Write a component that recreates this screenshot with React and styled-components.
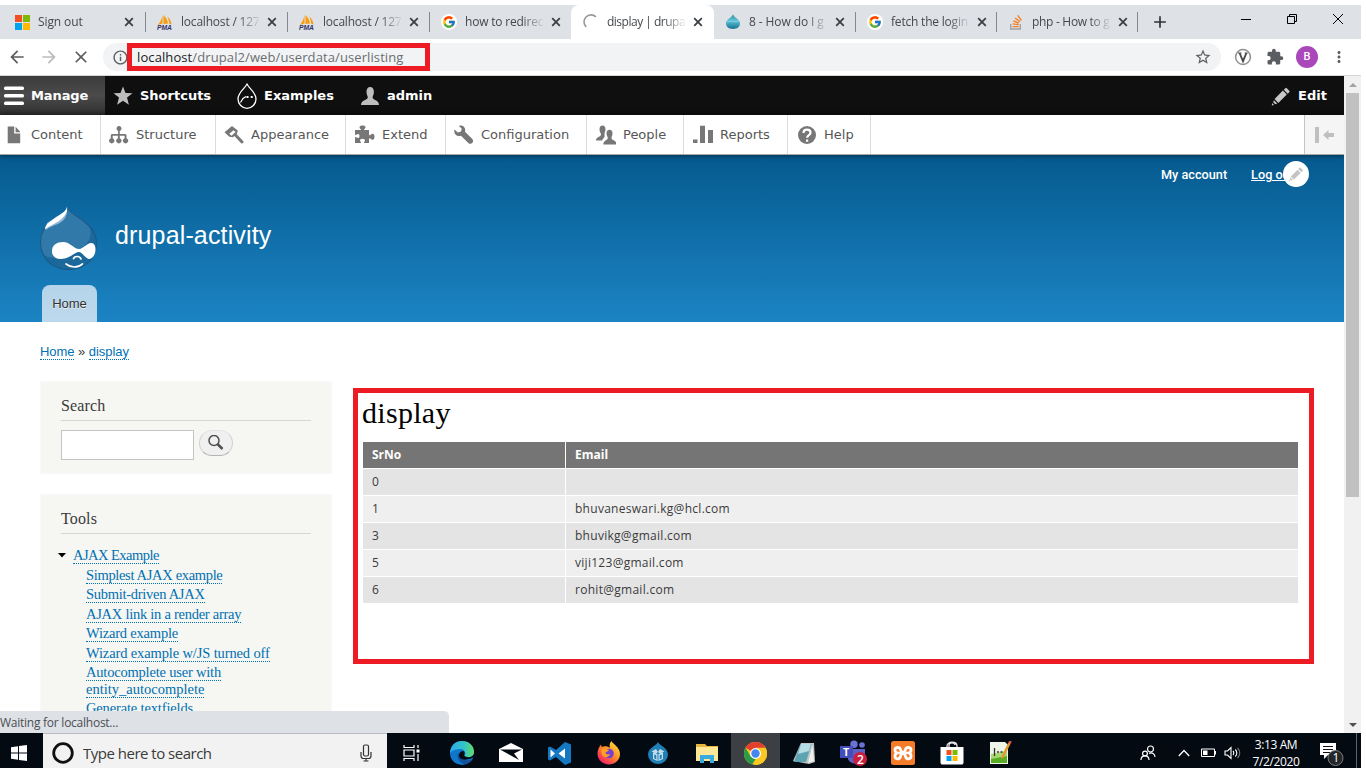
import React from "react";
import styled, { createGlobalStyle, css } from "styled-components";
import { FcGoogle } from "react-icons/fc";
import { MdArrowBack, MdArrowForward, MdClose, MdInfoOutline, MdStarBorder, MdExtension, MdMoreVert, MdAdd } from "react-icons/md";

const GlobalStyle = createGlobalStyle`
  * { box-sizing: border-box; }
  html, body { margin: 0; padding: 0; background: #fff; overflow: hidden; }
  svg { display: block; flex: none; }
  a { color: inherit; text-decoration: none; }
`;

const ui = `"Open Sans", "Noto Sans", sans-serif`;
const georgia = `"Liberation Serif", serif`;
const arial = `"Liberation Sans", Arial, sans-serif`;
const verdana = `"DejaVu Sans", Verdana, sans-serif`;

const Screen = styled.div`
  width: 1361px;
  height: 768px;
  padding-top: 5px;
  display: flex;
  flex-direction: column;
  overflow: hidden;
  background: #fff;
  font-family: ${ui};
  white-space: nowrap;
`;

/* ---------- Browser chrome ---------- */
const TabStrip = styled.div`
  height: 34px;
  flex: none;
  display: flex;
  background: #dee1e6;
  color: #45494d;
`;
const Tab = styled.div`
  width: ${(p) => p.$w || 142}px;
  padding-left: ${(p) => p.$pad || 11}px;
  display: flex;
  align-items: center;
  ${(p) => p.$active && css`
    background: #fff;
    border-radius: 8px 8px 0 0;
  `}
`;
const Favicon = styled.div`
  width: 16px;
  height: 16px;
  margin-right: 8px;
  flex: none;
  display: grid;
  place-items: center;
  border-radius: 50%;
  background: ${(p) => (p.$round ? "#fff" : "transparent")};
`;
const TabTitle = styled.div`
  width: 80px;
  font-size: 12px;
  line-height: 18px;
  letter-spacing: ${(p) => p.$ls || -0.2}px;
  mask-image: linear-gradient(90deg, #000 57px, transparent 80px);
`;
const TabClose = styled.div`
  width: 14px;
  margin-left: 4px;
  color: #3c4043;
`;
const TabDivider = styled.i`
  width: 1px;
  height: 20px;
  margin-left: auto;
  background: #85898e;
`;
const NewTab = styled.div`
  padding: 7px 0 0 12px;
  flex: 1;
  color: #303336;
`;
const WindowButtons = styled.div`
  display: flex;
  gap: 34px;
  padding: 8px 17px 0 0;
`;

const AddressRow = styled.div`
  height: 37px;
  flex: none;
  display: flex;
  align-items: center;
  border-bottom: 1px solid #d4d6d8;
  color: #5a5d61;
`;
const NavButtons = styled.div`
  display: flex;
  gap: 12px;
  width: 103px;
  padding-left: 7px;
`;
const AddressBar = styled.div`
  width: 1118px;
  height: 28px;
  padding: 0 9px 0 9px;
  display: flex;
  align-items: center;
  border-radius: 14px;
  background: #f1f3f4;
`;
const UrlMark = styled.div`
  width: 303px;
  height: 28px;
  margin-left: -2px;
  margin-right: auto;
  padding-left: 5px;
  border: 5px solid #ed1c24;
  font-size: 13px;
  line-height: 18px;
  letter-spacing: 0.1px;
  color: #6a6e72;
  background: #f1f3f4;
  b { font-weight: 400; color: #202124; }
`;
const Extensions = styled.div`
  flex: 1;
  display: flex;
  align-items: center;
  padding-left: 13px;
`;
const ExtensionIcon = styled.div`
  margin-left: 14px;
`;
const Avatar = styled.div`
  width: 22px;
  height: 22px;
  margin: 0 12px 0 12px;
  border-radius: 50%;
  background: #a947bb;
  color: #fff;
  font: 500 11px/22px Roboto, sans-serif;
  text-align: center;
`;

/* ---------- Page ---------- */
const Viewport = styled.div`
  flex: 1;
  min-height: 0;
  display: flex;
  position: relative;
`;
const Page = styled.div`
  width: 1344px;
  overflow: hidden;
`;
const ScrollTrack = styled.div`
  width: 17px;
  padding: 0 2px;
  display: flex;
  flex-direction: column;
  align-items: center;
  background: #f1f1f1;
`;
const ScrollArrow = styled.i`
  height: 17px;
  display: grid;
  place-items: center;
`;
const ScrollThumb = styled.i`
  width: 13px;
  height: 404px;
  margin-bottom: auto;
  background: #c1c1c1;
`;

const AdminBar = styled.div`
  height: 39px;
  display: flex;
  background: #0f0f0f;
  color: #fff;
  font: 700 13px/39px ${verdana};
`;
const AdminTab = styled.div`
  width: ${(p) => p.$w}px;
  padding-left: ${(p) => p.$pad}px;
  display: flex;
  align-items: center;
  gap: 7px;
  letter-spacing: ${(p) => p.$ls || 0}px;
  ${(p) => p.$active && css`background: linear-gradient(#3c3c3c 0%, #4b4b4b 50%, #2f2f2f 100%);`}
`;
const EditTab = styled(AdminTab)`
  margin-left: auto;
`;
const Tray = styled.div`
  height: 40px;
  display: flex;
  position: relative;
  background: #fff;
  border-bottom: 1px solid #a6a6a6;
  box-shadow: 0 0 5px 1px rgba(0, 0, 0, 0.45);
`;
const TrayItem = styled.div`
  width: ${(p) => p.$w}px;
  padding-left: ${(p) => p.$pad || 8}px;
  display: flex;
  align-items: center;
  gap: 7px;
  border-right: 1px solid #dcdcdc;
  color: #565656;
  font: 13px/39px ${verdana};
`;
const TrayToggle = styled.div`
  width: 40px;
  margin-left: auto;
  border-left: 1px solid #c4c4c4;
  background: #f5f5f5;
`;

const Header = styled.header`
  height: 167px;
  padding-left: 40px;
  display: flex;
  flex-direction: column;
  background: linear-gradient(#055a8e, #1c84c4);
  color: #fff;
  font-family: ${arial};
`;
const AccountMenu = styled.nav`
  align-self: flex-end;
  display: flex;
  gap: 24px;
  height: 51px;
  padding: 11px 50px 0 0;
  font: 500 12.7px/18px Roboto, ${arial};
  position: relative;
  u { text-underline-offset: 1px; }
`;
const EditBadge = styled.span`
  position: absolute;
  right: 35px;
  top: 6px;
  width: 26px;
  height: 26px;
  border-radius: 50%;
  display: grid;
  place-items: center;
  background: #fff;
`;
const Branding = styled.div`
  display: flex;
  height: 79px;
  gap: 17px;
  h1 {
    margin: 13px 0 0;
    font: 400 25px/32px ${arial};
    letter-spacing: 0.15px;
  }
`;
const HomeTab = styled.div`
  width: 55px;
  height: 37px;
  margin-left: 2px;
  border-radius: 8px 8px 0 0;
  background: linear-gradient(#b5d4ea, #bdd9ec);
  color: #333;
  font: 13px/37px ${arial};
  text-align: center;
  text-shadow: 0 1px 0 #eee;
`;

const Link = styled.a`
  color: #0071b3;
  border-bottom: 1px dotted #0071b3;
`;
const Breadcrumb = styled.nav`
  height: 59px;
  padding: 22px 0 0 40px;
  font: 13px/15px ${arial};
  color: #3b3b3b;
  letter-spacing: -0.05px;
  ${Link} { display: inline-block; }
`;
const Columns = styled.div`
  display: flex;
  align-items: flex-start;
  padding-left: 40px;
`;
const Sidebar = styled.aside`
  width: 292px;
  display: flex;
  flex-direction: column;
  gap: 20px;
  color: #3b3b3b;
  font-family: ${georgia};
`;
const Block = styled.section`
  height: ${(p) => p.$h}px;
  padding: 14px 20px 0;
  border: 1px solid #f9f9f9;
  background: #f6f6f2;
  h2 {
    height: 25px;
    margin: 0 0 9px;
    border-bottom: 1px solid #d6d6d6;
    font: 400 16px/20px ${georgia};
    letter-spacing: 0.15px;
  }
`;
const SearchForm = styled.div`
  display: flex;
  gap: 5px;
`;
const SearchInput = styled.div`
  width: 133px;
  height: 30px;
  border: 1px solid #c4c4c4;
  background: #fff;
`;
const SearchButton = styled.div`
  width: 34px;
  height: 26px;
  display: grid;
  place-items: center;
  border: 1px solid;
  border-color: #e4e4e4 #d2d2d2 #b4b4b4;
  border-radius: 13px;
  background: #f0f0f0;
`;
const MenuTop = styled.div`
  display: flex;
  align-items: center;
  gap: 7px;
  height: 20px;
  margin-top: 11px;
  margin-left: -3px;
  font-size: 14.5px;
  line-height: 16px;
  ${Link} { letter-spacing: -0.53px; }
`;
const MenuList = styled.ul`
  margin: 2px 0 0 25px;
  padding: 0;
  list-style: none;
  font-size: 14.5px;
  line-height: 17px;
`;
const MenuItem = styled.li`
  margin-bottom: 2.4px;
`;
const MenuLink = styled(Link)`
  line-height: 14px;
  letter-spacing: ${(p) => p.$ls}px;
`;

const Main = styled.main`
  width: 961px;
  height: 276px;
  margin: 7px 0 0 21px;
  padding: 2px 11px 0 5px;
  border: 5px solid #ed1c24;
  h1 {
    height: 47px;
    margin: 0 0 0 -1px;
    font: 400 30px/36px ${georgia};
    letter-spacing: 0.3px;
    color: #000;
  }
`;
const Table = styled.div`
  display: grid;
  grid-template-columns: 202px 1fr;
  grid-auto-rows: 26px;
  gap: 1px;
  font: 12px/26px ${ui};
  color: #3b3b3b;
`;
const Cell = styled.div`
  padding-left: 9px;
  background: ${(p) => (p.$odd ? "#e4e4e4" : "#efefef")};
  letter-spacing: 0.28px;
`;
const HeadCell = styled.div`
  padding-left: 9px;
  background: #757575;
  color: #fff;
  font-weight: 700;
`;

const StatusBubble = styled.div`
  position: absolute;
  left: 0;
  bottom: 0;
  width: 449px;
  height: 22px;
  border-radius: 0 5px 0 0;
  background: #dee1e6;
  color: #4b4e52;
  font-size: 12px;
  line-height: 23px;
  letter-spacing: -0.25px;
`;

/* ---------- Taskbar ---------- */
const Taskbar = styled.div`
  height: 35px;
  flex: none;
  display: flex;
  background: #040a12;
  color: #fff;
`;
const Start = styled.div`
  width: 43px;
  padding: 12px 0 0 11px;
`;
const SearchBox = styled.div`
  width: 344px;
  padding: 4px 15px 0 9px;
  display: flex;
  align-items: center;
  gap: 9px;
  border-top: 1px solid #b9bcc0;
  background: #f2f2f2;
  color: #3a3a3a;
  font-size: 15px;
  letter-spacing: -0.5px;
  > :last-child { margin-left: auto; }
`;
const AppButton = styled.div`
  width: 49px;
  padding-top: 5px;
  display: grid;
  place-items: center;
  ${(p) => p.$first && css`margin-right: 1px;`}
  ${(p) => p.$active && css`background: #3c4045;`}
`;
const SystemTray = styled.div`
  margin-left: auto;
  width: 221px;
  display: flex;
  align-items: center;
  padding-top: 4px;
`;
const Spacer = styled.i`
  width: ${(p) => p.$w}px;
`;
const Clock = styled.div`
  width: 62px;
  margin: 1px 0 0 4px;
  font-size: 12px;
  line-height: 17px;
  letter-spacing: -0.4px;
  text-align: center;
`;
const Notification = styled.div`
  margin: 4px 0 0 12px;
`;
const ShowDesktop = styled.i`
  width: 1px;
  height: 35px;
  margin: -4px 4px 0 auto;
  background: #5d6268;
`;

/* ---------- Icons ---------- */
const Microsoft = ({ s = 15 }) => (
  <svg width={s} height={s} viewBox="0 0 15 15">
    <path fill="#f25022" d="M0 0h7v7H0z" /><path fill="#7fba00" d="M8 0h7v7H8z" />
    <path fill="#00a4ef" d="M0 8h7v7H0z" /><path fill="#ffb900" d="M8 8h7v7H8z" />
  </svg>
);
const Pma = () => (
  <svg width="16" height="16" viewBox="0 0 16 16">
    <path fill="#f89c0e" d="M5.500 1v8.500L1 11C3 8 5 5 5.500 1zM6.500 1c2.500 2.500 4 5 4.500 8.500L6.500 10zM10 2.500c3 2 4 4.500 4.500 8L12 9.500c0-3-.7-5-2-7z" />
    <text x="0" y="15.800" fontFamily="Liberation Sans" fontWeight="700" fontStyle="italic" fontSize="6.5" fill="#33336b" textLength="15" lengthAdjust="spacingAndGlyphs">PMA</text>
  </svg>
);
const Google = () => <FcGoogle size={14} />;
const Spinner = () => (
  <svg width="16" height="16" viewBox="0 0 16 16" fill="none" stroke="#999" strokeWidth="1.600">
    <path d="M3.200 13A7 7 0 0 1 13 2.800" />
  </svg>
);
const BlueDrop = () => (
  <svg width="16" height="16" viewBox="0 0 16 16">
    <defs><linearGradient id="bd" x1="0" y1="0" x2="0" y2="1"><stop offset="0" stopColor="#3a8b97" /><stop offset=".45" stopColor="#5fc3d9" /><stop offset="1" stopColor="#14708f" /></linearGradient></defs>
    <path fill="url(#bd)" d="M8 0c0 3 7 5 7 9.300C15 13 12 15 8 15s-7-2-7-5.700C1 5 8 3 8 0z" />
    <path fill="none" stroke="#a3dbe8" strokeWidth=".6" d="M2 8c3-2 8 1 12-1" />
  </svg>
);
const Stack = () => (
  <svg width="14" height="16" viewBox="0 0 14 16" fill="none">
    <path stroke="#9ea3a8" strokeWidth="1.400" d="M1.700 10v5h9.600v-5" />
    <path stroke="#f48024" strokeWidth="1.400" d="M3.500 12.600h6M3.600 9.900l6 .8M4.400 7l5.500 2M6 4l5 3.700M8.700 1.400l3.700 5" />
  </svg>
);
const CloseTab = () => (
  <svg width="14" height="14" viewBox="0 0 14 14" stroke="#3c4043" strokeWidth="1.800"><path d="M3.200 3.200l7.600 7.600M10.800 3.200l-7.600 7.600" /></svg>
);
const WinIcon = ({ d }) => (
  <svg width="12" height="12" viewBox="0 0 12 12" fill="none" stroke="#000" strokeWidth="1"><path d={d} /></svg>
);
const VBadge = () => (
  <svg width="18" height="18" viewBox="0 0 18 18" fill="none">
    <circle cx="9" cy="9" r="7.400" stroke="#919191" strokeWidth="1.500" fill="#fff" />
    <path d="M5.600 5l3.400 8.200L12.400 5" stroke="#4a4a4a" strokeWidth="1.900" />
    <path d="M4 5h3.500M10.700 5h3" stroke="#4a4a4a" strokeWidth="1" />
  </svg>
);
const Hamburger = () => (
  <svg width="20" height="20" viewBox="0 0 20 20" fill="#fff">
    <rect x="0" y=".5" width="20" height="3.500" rx="1.500" /><rect x="0" y="8" width="20" height="3.500" rx="1.500" /><rect x="0" y="15.500" width="20" height="3.500" rx="1.500" />
  </svg>
);
const Star = () => (
  <svg width="20" height="20" viewBox="0 0 20 20" fill="#bebebe"><path d="M10 .5l2.500 6.500 7 .3-5.500 4.300 1.900 7.200-5.900-4-5.900 4 1.900-7.200L.5 7.300l7-.3z" /></svg>
);
const DropFace = () => (
  <svg width="20" height="28" viewBox="0 0 20 28" fill="none" stroke="#fff">
    <path strokeWidth="1.300" d="M10 1.500c.5 4 9 8 9 15.500a9 9.300 0 0 1-18 0C1 9.500 9.500 5.500 10 1.500z" />
    <path strokeWidth="1.200" d="M3.500 20.500L6 16.500l3-2" /><path stroke="none" fill="#fff" d="M9.500 14h2v2h-2zM13.700 14h2v2h-2z" />
  </svg>
);
const userPath = "M6.500 6C6.500 2.500 8 1 10.200 1s3.700 1.500 3.700 5c0 2.500-1.300 4-1.300 5.500 0 2.500 6.400 2.500 6.400 7.500H1c0-5 6.800-5 6.800-7.500C7.800 10 6.500 8.500 6.500 6z";
const User = () => <svg width="20" height="20" viewBox="0 0 20 20" fill="#bebebe"><path d={userPath} /></svg>;
const TrayIcon = ({ children }) => <svg width="20" height="20" viewBox="0 0 20 20" fill="#777">{children}</svg>;
const Pencil = ({ s = 20, color = "#c8c8c8" }) => (
  <svg width={s} height={s} viewBox="0 0 20 20" fill={color}>
    <path d="M15.800 2.300l2.200 2.200c.8.800.8 1.200 0 2l-1.300 1.200-3.900-4 1.300-1.300c.7-.8 1-.8 1.700-.1zM11.900 4.600l3.900 4-8.500 8.300-3.700-3.900zM2.900 14.200l3.300 3.400-2 .7-2-2.100zM1.200 17l1.800 1.900-2.200.5z" />
  </svg>
);
const Druplicon = () => (
  <svg width="58" height="65" viewBox="0 0 58 65">
    <defs><clipPath id="drop"><path d="M27 0c3 7 10 9 16 14 8 6 14 13 14 23 0 17-13 27-28.500 27S0 53 0 36c0-12 8-19 14-23 8-5 13-6 13-13z" /></clipPath></defs>
    <g clipPath="url(#drop)">
      <rect width="58" height="65" fill="#1d689a" />
      <path fill="#3079a9" d="M0 0h40l8 15c6 14 2 25-13 30C22 51 12 54 4 49l-6-12z" />
      <path fill="none" stroke="#195987" strokeWidth="2" d="M27 0c3 7 10 9 16 14 8 6 14 13 14 23 0 17-13 27-28.500 27S0 53 0 36c0-12 8-19 14-23 8-5 13-6 13-13z" />
    </g>
    <path fill="#8fb6d0" d="M27 4c0 7-3 11-9 14-5 2-9 3-12 6l1-7z" />
    <path fill="#fff" d="M27 .5c1 6-2 9.500-8 14.500-6 4-10 5-14 8.500C5 18 10 16 15 12 21 8 26 6 27 .5z" />
    <path fill="#fff" d="M12 45c0-6 5-9 11-9 7 0 11 7 16 7 4 0 8-6 12-6 5 0 5 7 4 10-1 4-4 6-6 6-3 0-7-7-10-7-4 0-10 7-18 7-6 0-9-3-9-8z" />
    <path fill="none" stroke="#fff" strokeWidth="1.700" strokeLinecap="round" d="M33.500 52.500c1.500-3 6.500-2.500 7.500.5M26 58c5 4 12 4 16.500-.2" />
  </svg>
);
const Cortana = () => <svg width="22" height="22" viewBox="0 0 22 22"><circle cx="11" cy="11" r="9.300" fill="none" stroke="#101010" strokeWidth="2.800" /></svg>;
const Mic = () => <svg width="12" height="18" viewBox="0 0 12 18" fill="none" stroke="#333" strokeWidth="1.200"><rect x="3.500" y="1" width="5" height="11" rx="1.500" /><path d="M1 8v4c0 1.500 1 2.500 2.500 2.500h5c1.500 0 2.500-1 2.500-2.500V8M6 14.500V17M3.500 17h5" /></svg>;
const TaskView = () => <svg width="17" height="16" viewBox="0 0 17 16" fill="none" stroke="#fff" strokeWidth="1.200"><path d="M1 0v2.500h10V0M1 16v-2.500h10V16M1 5h10v6H1zM15 0v3M15 9v7" /><path fill="#fff" stroke="none" d="M13.500 4.500h3v3h-3z" /></svg>;
const Edge = () => (
  <svg width="24" height="24" viewBox="0 0 24 24">
    <defs><linearGradient id="e1" x1="0" x2="1"><stop offset="0" stopColor="#2fa8ec" /><stop offset=".6" stopColor="#33c5c5" /><stop offset="1" stopColor="#69da65" /></linearGradient></defs>
    <circle cx="12" cy="12" r="12" fill="#0d78cc" />
    <path fill="url(#e1)" d="M.5 9C2 3 6.500 0 12 0c7 0 12 5 12 10.500 0 4-3 6-6 6-2.500 0-4-1-3.500-2 2-3-.5-6.500-4-6.500C6 8 2.500 9 0 12z" />
    <path fill="#13509c" d="M8 12c-2 5 2 10 7 11.300 3-.8 5.500-2.300 7.500-5C16 21 11 18 8 12z" />
    <path fill="#040a12" d="M14 14.500c1-1.500 1-3.300-.5-4.500-2 0-4.500 1.500-4.500 4.300 0 4 5 5.700 12 3.300l3-1.800V13c-2 3.500-6.500 4.500-10 1.500z" />
  </svg>
);
const Mail = () => <svg width="24" height="20" viewBox="0 0 24 20"><path fill="#fff" d="M0 6L12 0l12 6v13H0z" /><path fill="#040a12" d="M1 6.500h22l-8 4 5 6.500-9-5z" /></svg>;
const VsCode = () => <svg width="23" height="23" viewBox="0 0 23 23"><path fill="#1578c2" d="M17 0l6 2.500v18L17 23 8 15l-6 3.500-2-1V5.500l2-1L8 8z" /><path fill="#fff" d="M17 6.500l-6.500 5 6.500 5zM2.500 7.500v8l4.500-4z" /></svg>;
const Firefox = () => (
  <svg width="24" height="24" viewBox="0 0 24 24">
    <defs><linearGradient id="ff" x1="1" y1="0" x2=".2" y2="1"><stop offset="0" stopColor="#fff14e" /><stop offset=".45" stopColor="#ff9b23" /><stop offset="1" stopColor="#f5156c" /></linearGradient></defs>
    <path fill="url(#ff)" d="M14.500 0c1 3 8.500 6 8.500 13 0 6-5 10.500-11 10.500S.5 19 .5 12.500C.5 9 2 6.500 3 5l1-1.500.6 2.600C7 4.500 11 5 13 7c-1-3 0-5.500 1.500-7z" />
    <circle cx="12" cy="12.500" r="4.800" fill="#7542cf" />
    <path fill="#ff9f24" d="M4 8.500c3-2 6-.5 8 1l-3.500 2c0 2 2.500 2.500 4.500 1.500-1.500 4-6 4-8 1z" />
  </svg>
);
const Devel = () => <svg width="20" height="22" viewBox="0 0 20 22"><path fill="#1f7fb6" d="M10 0c.5 3 10 5.500 10 12.500a10 9.500 0 0 1-20 0C0 5.500 9.500 3 10 0z" /><path fill="#c5deea" d="M5 10.500l4.500 1.500v7L5 17zM15 10.500L10.500 12v7l4.500-2zM3.500 9.500L8 7l2 3-2 1.500zM16.500 9.500L12 7l-2 3 2 1.500z" /><path fill="#1f7fb6" d="M6.300 12.500l2 .7v4l-2-.8zM13.700 12.500l-2 .7v4l2-.8z" /></svg>;
const Explorer = () => <svg width="22" height="19" viewBox="0 0 22 19"><path fill="#e5b63b" d="M0 0h9l2 2h11v5H0z" /><path fill="#ffe798" d="M0 3h22v14H0z" /><path fill="#35abe2" d="M4 19v-8h14v8h-4v-4H8v4z" /></svg>;
const Chrome = () => (
  <svg width="23" height="23" viewBox="0 0 24 24">
    <circle cx="12" cy="12" r="12" fill="#fbc822" />
    <path fill="#e33e2e" d="M12 12L1.600 6A12 12 0 0 1 22.400 6z" />
    <path fill="#299b49" d="M1.600 6L7 15l5 3-3.500 5.500A12 12 0 0 1 1.600 6z" />
    <path fill="#fbc822" d="M12 6h10.400A12 12 0 0 1 11 24l5.500-9z" />
    <circle cx="12" cy="12" r="5.700" fill="#fff" /><circle cx="12" cy="12" r="4.400" fill="#4286ee" />
  </svg>
);
const Notepad = () => <svg width="24" height="22" viewBox="0 0 24 22"><path fill="#bfc4c5" d="M8 1h13l1 19-6 2L0 19z" /><path fill="#5da4b3" d="M7.500 2h11L13 20H1z" /><path fill="#b4dde4" d="M8 2h10l-2 7-11 3z" /><path fill="#f1f1ec" d="M19.500 3l1.500 16-6 2z" /></svg>;
const Teams = () => <svg width="27" height="26" viewBox="0 0 27 26"><circle cx="14" cy="4.300" r="3.700" fill="#6973d6" /><circle cx="22" cy="5" r="2.800" fill="#6973d6" /><path fill="#5b62c4" d="M8 9h17v8c0 3-3 5-5 4-3 4-10 3-12-2z" /><path fill="#444db9" d="M0 6h13v12H0z" /><text x="3" y="16" fontSize="11" fontWeight="700" fontFamily="Open Sans" fill="#fff">T</text><circle cx="20" cy="19" r="7" fill="#c91e3c" /><text x="17" y="23.500" fontSize="12" fontFamily="Open Sans" fontWeight="600" fill="#fff">2</text></svg>;
const Xampp = () => <svg width="24" height="24" viewBox="0 0 24 24"><rect width="24" height="24" rx="2.500" fill="#f47b28" /><path fill="none" stroke="#fff" strokeWidth="2.800" strokeLinejoin="round" strokeLinecap="round" d="M9 12h6M9.500 8.500C8.500 5.500 4 6 4 9c0 1.500 1 3 2.500 3C5 12 4 13.500 4 15c0 3.500 4.500 4 5.500.5.500-2 .5-2.500 2.500-3.500 2-1 2-1.500 2.500-3.500 1-3 5.500-2.500 5.500.5 0 1.500-1 3-2.500 3 1.500 0 2.500 1.500 2.500 3 0 3.500-4.500 4-5.500.5-.5-2-.5-2.500-2.500-3.500-2-1-2-1.500-2.500-3.500z" /></svg>;
const Store = () => <svg width="24" height="24" viewBox="0 0 24 24"><path fill="none" stroke="#e6e6e6" strokeWidth="1.300" d="M7 7V5c0-5 10-5 10 0v2M9 7V4c0-3 6-3 6 0" /><path fill="#fff" d="M.5 6h23v16l-1 1.500h-21l-1-1.500z" /><path fill="#f25022" d="M6.500 9h5v5h-5z" /><path fill="#7fba00" d="M12.500 9h5v5h-5z" /><path fill="#00a4ef" d="M6.500 15h5v5h-5z" /><path fill="#ffb900" d="M12.500 15h5v5h-5z" /></svg>;
const NotepadPP = () => <svg width="23" height="24" viewBox="0 0 23 24"><path fill="#f0f5ea" d="M1 1h15l3 3v19H1z" /><path fill="#a9d873" d="M2 13l16-3v12H2z" /><path fill="#59ad22" d="M2 18l16-3v7H2z" /><path stroke="#333" strokeWidth="1.300" d="M5.500 7v8M8 11h2M11.500 11h2" /><path stroke="#e09a32" strokeWidth="2.600" d="M20.500 2L13 17" /><path stroke="#d9554d" strokeWidth="2.600" d="M21.500 0l-1 2.500" /></svg>;
const People = () => <svg width="16" height="16" viewBox="0 0 16 16" fill="none" stroke="#fff" strokeWidth="1.200"><circle cx="10.500" cy="4" r="3" /><circle cx="5" cy="8.500" r="2.400" /><path d="M1 15c0-5.500 8-5.500 8 0M9 8.500c3-1.500 6 .5 6 3.500" /></svg>;
const Chevron = () => <svg width="12" height="8" viewBox="0 0 12 8" fill="none" stroke="#fff" strokeWidth="1.300"><path d="M.8 7L6 1.500 11.200 7" /></svg>;
const Battery = () => <svg width="15" height="10" viewBox="0 0 15 10"><path fill="none" stroke="#fff" d="M.5 1h13v7.500H.5zM14.500 3v3.500" /><path fill="#fff" d="M2 2.500h4.500v4.500H2z" /></svg>;
const Volume = () => <svg width="17" height="14" viewBox="0 0 17 14" fill="none" stroke="#fff" strokeWidth="1.100"><path d="M1 5h2.500L7 1.500v11L3.500 9H1zM9 5c1 1 1 3 0 4M11.300 3.500c2 2 2 5 0 7" /><path stroke="#777" d="M13.500 2c3 3 3 7 0 10" /></svg>;
const Notice = () => <svg width="25" height="25" viewBox="0 0 25 25"><path fill="#fff" d="M1 1h16v12H9l-4 4v-4H1z" /><path stroke="#111" d="M4 4.500h10M4 7.500h10M4 10.500h7" /><circle cx="16.500" cy="16" r="7.500" fill="#24272a" stroke="#7b7d80" /><text x="13.500" y="20.300" fontFamily="Open Sans" fontSize="12" fill="#fff">1</text></svg>;

const tabs = [
  { title: "Sign out", icon: <Microsoft />, w: 146, pad: 14, ls: -0.1 },
  { title: "localhost / 127", icon: <Pma /> },
  { title: "localhost / 127", icon: <Pma /> },
  { title: "how to redirec", icon: <Google />, round: true, last: true, w: 141 },
  { title: "display | drupa", icon: <Spinner />, active: true, last: true, w: 143, pad: 12, ls: -0.5 },
  { title: "8 - How do I g", icon: <BlueDrop />, ls: -0.1 },
  { title: "fetch the login", icon: <Google />, round: true, w: 141 },
  { title: "php - How to g", icon: <Stack />, w: 141, ls: -0.3 },
];

const trayItems = [
  { label: "Content", w: 101, pad: 4, icon: <path d="M3.700 1.500h6.500v7H16.200v9.700H3.700zM11.600 1.700l4.600 5v.6h-4.600z" /> },
  { label: "Structure", w: 115, icon: <path fillRule="evenodd" d="M7.500 3.500a2.500 2.500 0 1 1 3.300 2.400V9h5.700l1 1v3.200a2.700 2.700 0 1 1-1.900 0v-2.500h-4.800v2.500a2.700 2.700 0 1 1-1.900 0v-2.500H3.700v2.500a2.700 2.700 0 1 1-1.900 0V10l1-1h6.300V5.900a2.500 2.500 0 0 1-1.600-2.400z" /> },
  { label: "Appearance", w: 130, icon: <><path fillRule="evenodd" d="M.5 7.300L8 1l5.700 4.500-.5 2.800L9 12.200l-3.700-.4zM5.300 8.800l2.200 1.900L11.600 7 9.500 5.300z" /><path d="M11 9.500l7 7.500" stroke="#777" strokeWidth="3" strokeLinecap="round" /></> },
  { label: "Extend", w: 100, pad: 9, icon: <path d="M0 5h6c0-1-1.500-1.500-1.500-2.800C4.500 1 6 .5 7.500.5s3 .5 3 1.700C10.500 3.500 9 4 9 5h5v4c0 1 .5 1.500 1.200 1.200.8-.5 1.300-1.400 2.500-1.400 1 0 1.800 1.200 1.800 3s-.8 3-1.800 3c-1.200 0-1.700-1-2.500-1.400-.7-.3-1.200.2-1.200 1.200V18H9c0-1.500 1-1.500 1-2.500 0-1-1-1.700-2.500-1.700S5 14.500 5 15.500c0 1 1 1 1 2.500H0v-6c1.500 0 2 1 3.200 1 .8 0 1.300-.8 1.300-2s-.5-2-1.300-2C2 9 1.500 10 0 10z" /> },
  { label: "Configuration", w: 141, icon: <path d="M6 .5c3-.5 5.500 2 5.200 5l-.2 1.200 7.300 7.200c2.500 2.800-1.200 6.500-4 4L7 10.700C3.500 12 .3 9.500.3 6.200c0-.7.1-1.200.3-1.700l3.200 3 3.200-1 .7-3L4.800 1z" /> },
  { label: "People", w: 97, pad: 9, icon: <><path d="M3.500 4.500C3.500 1.800 4.600.5 6.500.5s3 1.300 3 4c0 1-.4 2-.8 3-.5 3 .3 3.500-.5 5-1 1-1.700 1.700-2 3H0c0-4 5-3.500 5-6 0-1.500-1.500-2.500-1.500-5z" /><path d="M10.500 8.500c0-2.500 1-3.700 3-3.700s3 1.200 3 3.700c0 2-1 3-1 4.500 0 2.500 5 2 5 6.500H7.300c0-4.500 4.500-4 4.500-6.500 0-1.500-1.300-2.500-1.300-4.500z" /></> },
  { label: "Reports", w: 104, pad: 9, icon: <path d="M0 14.500h4.500V18H0zM7 .7h5V18H7zM15 5h5v13h-5z" /> },
  { label: "Help", w: 83, pad: 9, icon: <><circle cx="10" cy="10" r="9" /><path d="M6.500 8c0-4.500 7-4.200 7-.3 0 2.500-3.400 2.200-3.400 5M10.100 14.500v2.200" fill="none" stroke="#fff" strokeWidth="2.200" /></> },
];

const menu = [
  [["Simplest AJAX example", -0.33]],
  [["Submit-driven AJAX", -0.28]],
  [["AJAX link in a render array", -0.26]],
  [["Wizard example", -0.2]],
  [["Wizard example w/JS turned off", -0.13]],
  [["Autocomplete user with", -0.2], ["entity_autocomplete", 0]],
  [["Generate textfields", -0.15]],
];
const rows = [["0", ""], ["1", "bhuvaneswari.kg@hcl.com"], ["3", "bhuvikg@gmail.com"], ["5", "viji123@gmail.com"], ["6", "rohit@gmail.com"]];
const apps = [TaskView, Edge, Mail, VsCode, Firefox, Devel, Explorer, Chrome, Notepad, Teams, Xampp, Store, NotepadPP];

export default function App() {
  return (
    <Screen>
      <GlobalStyle />
      <TabStrip>
        {tabs.map((t, i) => (
          <Tab key={i} $w={t.w} $pad={t.pad} $active={t.active}>
            <Favicon $round={t.round}>{t.icon}</Favicon>
            <TabTitle $ls={t.ls}>{t.title}</TabTitle>
            <TabClose><CloseTab /></TabClose>
            {!t.last && <TabDivider />}
          </Tab>
        ))}
        <NewTab><MdAdd size={20} /></NewTab>
        <WindowButtons>
          <WinIcon d="M1 6.500h10" />
          <WinIcon d="M1.500 3.500h7v7h-7zM3.500 3V1.500h7v7H9" />
          <WinIcon d="M1 1l10 10M11 1L1 11" />
        </WindowButtons>
      </TabStrip>
      <AddressRow>
        <NavButtons>
          <MdArrowBack size={20} /><MdArrowForward size={20} color="#babcbe" /><MdClose size={20} />
        </NavButtons>
        <AddressBar>
          <MdInfoOutline size={17} />
          <UrlMark><b>localhost</b>/drupal2/web/userdata/userlisting</UrlMark>
          <MdStarBorder size={18} />
        </AddressBar>
        <Extensions>
          <VBadge />
          <ExtensionIcon><MdExtension size={18} /></ExtensionIcon>
          <Avatar>B</Avatar>
          <MdMoreVert size={18} />
        </Extensions>
      </AddressRow>

      <Viewport>
        <Page>
          <AdminBar>
            <AdminTab $w={105} $pad={4} $ls={-0.1} $active><Hamburger />Manage</AdminTab>
            <AdminTab $w={123} $pad={8}><Star />Shortcuts</AdminTab>
            <AdminTab $w={125} $pad={9}><DropFace />Examples</AdminTab>
            <AdminTab $w={100} $pad={7}><User />admin</AdminTab>
            <EditTab $w={73} $pad={0}><Pencil />Edit</EditTab>
          </AdminBar>
          <Tray>
            {trayItems.map((t) => (
              <TrayItem key={t.label} $w={t.w} $pad={t.pad}><TrayIcon>{t.icon}</TrayIcon>{t.label}</TrayItem>
            ))}
            <TrayToggle>
              <svg width="39" height="39" viewBox="0 0 39 39" fill="#bfbfbf"><path d="M10 12h4v16h-4zM18 20l5.500-5v3H29v4h-5.500v3z" /></svg>
            </TrayToggle>
          </Tray>
          <Header>
            <AccountMenu>
              <span>My account</span><u>Log out</u>
              <EditBadge><Pencil s={16} color="#c4c4c4" /></EditBadge>
            </AccountMenu>
            <Branding><Druplicon /><h1>drupal-activity</h1></Branding>
            <HomeTab>Home</HomeTab>
          </Header>
          <Breadcrumb><Link>Home</Link> » <Link>display</Link></Breadcrumb>
          <Columns>
            <Sidebar>
              <Block $h={93}>
                <h2>Search</h2>
                <SearchForm>
                  <SearchInput />
                  <SearchButton>
                    <svg width="16" height="16" viewBox="0 0 16 16" fill="none" stroke="#505050"><circle cx="6" cy="5.500" r="5" strokeWidth="1.500" /><path d="M9.500 9l5 5" strokeWidth="2.500" /></svg>
                  </SearchButton>
                </SearchForm>
              </Block>
              <Block $h={300}>
                <h2>Tools</h2>
                <MenuTop>
                  <svg width="8" height="5" viewBox="0 0 8 5"><path d="M0 0h8L4 4.500z" /></svg>
                  <Link>AJAX Example</Link>
                </MenuTop>
                <MenuList>
                  {menu.map((lines) => (
                    <MenuItem key={lines[0][0]}>
                      {lines.map(([text, ls], i) => <React.Fragment key={text}>{i > 0 && <br />}<MenuLink $ls={ls}>{text}</MenuLink></React.Fragment>)}
                    </MenuItem>
                  ))}
                </MenuList>
              </Block>
            </Sidebar>
            <Main>
              <h1>display</h1>
              <Table>
                <HeadCell>SrNo</HeadCell><HeadCell>Email</HeadCell>
                {rows.map(([n, mail], i) => (
                  <React.Fragment key={n}>
                    <Cell $odd={i % 2 === 0}>{n}</Cell><Cell $odd={i % 2 === 0}>{mail}</Cell>
                  </React.Fragment>
                ))}
              </Table>
            </Main>
          </Columns>
        </Page>
        <ScrollTrack>
          <ScrollArrow><svg width="8" height="4" viewBox="0 0 8 4"><path fill="#a3a3a3" d="M0 4l4-4 4 4z" /></svg></ScrollArrow>
          <ScrollThumb />
          <ScrollArrow><svg width="8" height="4" viewBox="0 0 8 4"><path fill="#505050" d="M0 0h8L4 4z" /></svg></ScrollArrow>
        </ScrollTrack>
        <StatusBubble>Waiting for localhost...</StatusBubble>
      </Viewport>

      <Taskbar>
        <Start><svg width="16" height="16" viewBox="0 0 16 16" fill="#fff"><path d="M0 2.200L7 1.200V7.500H0zM8 1l8-1v7.500H8zM0 8.500h7v6.300l-7-1zM8 8.500h8V16l-8-1z" /></svg></Start>
        <SearchBox><Cortana /><span>Type here to search</span><Mic /></SearchBox>
        {apps.map((Icon, i) => <AppButton key={i} $first={i === 0} $active={i === 7}><Icon /></AppButton>)}
        <SystemTray>
          <People />
          <Spacer $w={22} /><Chevron />
          <Spacer $w={11} /><Battery />
          <Spacer $w={8} /><Volume />
          <Clock>3:13 AM<br />7/2/2020</Clock>
          <Notification><Notice /></Notification>
          <ShowDesktop />
        </SystemTray>
      </Taskbar>
    </Screen>
  );
}
